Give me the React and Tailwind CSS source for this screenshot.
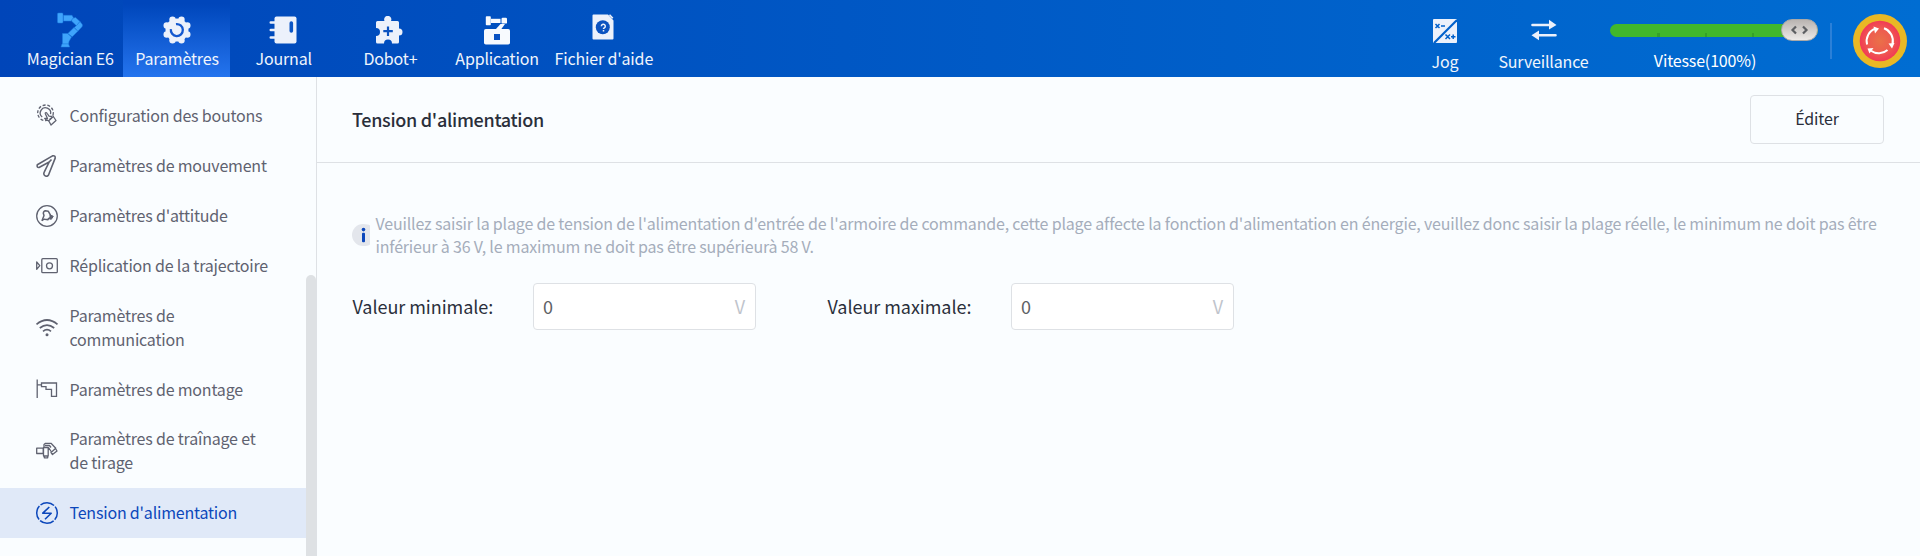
const navIcons = {
  robot: (
    <svg width="28" height="36" viewBox="0 0 28 36" fill="#3fa4fb" stroke="#1c7de0" strokeWidth="0.5">
      <rect x="1.500" y="1" width="5.500" height="10" rx="1" />
      <path d="M7.500 3.300h8.500l1.500 2.700-2.500 3H7.500z" />
      <path d="M16.500 6.500 19.500 5.500 24 9.500l-3.500 4.200-5-4.700z" />
      <path d="M24 9.500 26.300 12.500q.5 1.500-.5 2.500l-4 4.200-3.500-3.700 2.200-2z" />
      <path d="M18 15.500 21.800 19.200l-5.600 5.600-4.400-3.300z" />
      <path d="M6.500 21.500h5L15.500 25l-2.500 4.500-.5 2.500H6.500z" />
      <path d="M6 32h6.500l1.200 3H5z" />
    </svg>
  ),
  gear: (
    <svg width="28" height="28" viewBox="0 0 28 28">
      <g fill="#ecf1fb">
        <circle cx="14" cy="14" r="11.500" />
        <circle cx="18.500" cy="3.700" r="3.200" />
        <circle cx="24.300" cy="9.500" r="3.200" />
        <circle cx="24.300" cy="18.500" r="3.200" />
        <circle cx="18.500" cy="24.300" r="3.200" />
        <circle cx="9.500" cy="24.300" r="3.200" />
        <circle cx="3.700" cy="18.500" r="3.200" />
        <circle cx="3.700" cy="9.500" r="3.200" />
        <circle cx="9.500" cy="3.700" r="3.200" />
      </g>
      <path d="M13 8.100a6 6 0 1 1-5.100 5" fill="none" stroke="#1458cf" strokeWidth="2.300" />
    </svg>
  ),
  journal: (
    <svg width="28" height="28" viewBox="0 0 28 28">
      <rect x="5.500" y="0.500" width="22" height="27" rx="2" fill="#ecf1fb" />
      <g stroke="#ecf1fb" strokeWidth="2.600" strokeLinecap="round">
        <path d="M1.800 6.500H8M1.800 14H8M1.800 21.500H8" />
      </g>
      <rect x="20.500" y="5.200" width="3.600" height="11.500" rx="1.800" fill="#0b55c4" />
    </svg>
  ),
  puzzle: (
    <svg width="30" height="28" viewBox="0 0 30 28">
      <path
        d="M3.500 5H9.500a3.600 3.600 0 1 1 6.500 0H22.500a1.500 1.500 0 0 1 1.500 1.500V12.500a3.500 3.500 0 1 1 0 7V26a1.500 1.500 0 0 1-1.500 1.500H17a4 4 0 0 0-8 0H2.500A1.500 1.500 0 0 1 1 26V20a3.800 3.800 0 0 0 0-8V6.500A1.500 1.500 0 0 1 2.500 5z"
        fill="#ecf1fb"
      />
      <path d="M13 10.500v9.500M8.300 15.200h9.500" stroke="#0b52c0" strokeWidth="2.200" />
    </svg>
  ),
  application: (
    <svg width="28" height="30" viewBox="0 0 28 30" fill="#f7fafe">
      <rect x="1" y="14" width="26" height="15.500" rx="1.800" />
      <rect x="2.800" y="1.300" width="5" height="9" rx="0.800" />
      <rect x="8" y="3.800" width="9.500" height="4.200" />
      <rect x="18.500" y="2.800" width="5.500" height="5.800" rx="1.200" />
      <path d="M17.500 9h4.500l-4 5.500h-5.500z" />
      <rect x="11" y="19" width="6" height="6" fill="#0a52c2" />
    </svg>
  ),
  help: (
    <svg width="22" height="26" viewBox="0 0 22 26">
      <path d="M1.500 0.500H16l5.500 6V24.500a1 1 0 0 1-1 1h-19a1 1 0 0 1-1-1v-23a1 1 0 0 1 1-1z" fill="#ecf1fb" />
      <path d="M17.500 0.800 20.800 4.300" stroke="#ecf1fb" strokeWidth="1.600" />
      <circle cx="10.800" cy="13.300" r="7" fill="#0b52c0" />
      <path d="M9.300 12.200a2 2 0 1 1 3 1.700q-.8.500-.8 1.200M11.500 16v1.500" fill="none" stroke="#ecf1fb" strokeWidth="1.500" />
    </svg>
  ),
};

const navItems = [
  { icon: "robot", label: "Magician E6", pad: "pt-[12px]" },
  { icon: "gear", label: "Paramètres", pad: "pt-[16px]", active: true },
  { icon: "journal", label: "Journal", pad: "pt-[16px]" },
  { icon: "puzzle", label: "Dobot+", pad: "pt-[16px]" },
  { icon: "application", label: "Application", pad: "pt-[15px]" },
  { icon: "help", label: "Fichier d'aide", pad: "pt-[14px]" },
];

function NavItem({ icon, label, pad, active }) {
  return (
    <div
      className={`flex h-full w-[106.700px] flex-col items-center whitespace-nowrap text-[16px] tracking-[-0.15px] text-[#f0f5fc] ${
        active ? "bg-linear-to-b from-[#0046bb] from-5% to-[#2474ee]" : ""
      }`}
    >
      <div className={`flex h-[46px] shrink-0 items-start justify-center ${pad}`}>{navIcons[icon]}</div>
      <span className="pl-px leading-6">{label}</span>
    </div>
  );
}

function Speed() {
  return (
    <div className="ml-[9px] flex h-full w-[208px] flex-col pt-[19px]">
      <div className="relative flex h-[22px] items-center">
        <div className="flex h-[13px] w-full items-end rounded-full bg-[#41b72c]">
          <div className="ml-[47px] h-1 w-[3px] bg-[#35a029]" />
          <div className="ml-[45px] h-1 w-[2px] bg-[#35a029]" />
          <div className="ml-[45px] h-1 w-[2px] bg-[#35a029]" />
        </div>
        <div className="absolute right-0 top-0 flex h-[22px] w-[37px] items-center justify-center rounded-full border border-[#aaa9a8] bg-linear-to-b from-[#b9b4b1] to-[#edeae8]">
          <svg width="20" height="10" viewBox="0 0 20 10" fill="none" stroke="#5d5f62" strokeWidth="2.200">
            <path d="M6 1.500 2.500 5 6 8.500M13 1.500 16.500 5 13 8.500" />
          </svg>
        </div>
      </div>
      <span className="mt-[7px] w-[190px] text-center text-[16px] leading-6 tracking-[-0.15px] text-white">
        Vitesse(100%)
      </span>
    </div>
  );
}

function EmergencyStop() {
  return (
    <svg className="mb-[-5px] ml-[21px]" width="54" height="54" viewBox="0 0 54 54">
      <defs>
        <radialGradient id="stop">
          <stop offset="0" stopColor="#ea7048" />
          <stop offset="0.600" stopColor="#ee5b50" />
          <stop offset="1" stopColor="#f23a55" />
        </radialGradient>
      </defs>
      <circle cx="27" cy="27" r="27" fill="#e9b825" />
      <circle cx="27" cy="27" r="20.300" fill="url(#stop)" />
      <g fill="none" stroke="#fff" strokeWidth="2">
        <path d="M14.100 30.500A13.300 13.300 0 0 1 22.500 14.500" />
        <path d="M31 14.300A13.300 13.300 0 0 1 39.500 30" />
        <path d="M34.500 36A13.300 13.300 0 0 1 18 36.800" />
      </g>
      <g fill="#fff">
        <path d="M20.500 12.500 26 14.500l-4 5z" />
        <path d="M35.500 29.500l6-.5-2.500 5.500z" />
        <path d="M14.500 34.500l6-.5-4 5.500z" />
      </g>
    </svg>
  );
}

function Header() {
  return (
    <header className="flex h-[77px] shrink-0 bg-linear-to-r from-[#0045b9] to-[#006dd2] pl-[16.500px]">
      {navItems.map((item) => (
        <NavItem key={item.label} {...item} />
      ))}
      <div className="ml-auto flex h-full text-[16px] tracking-[-0.15px] text-[#f0f5fc]">
        <div className="flex w-[60px] flex-col items-center">
          <svg className="mt-[19px]" width="24" height="24" viewBox="0 0 24 24">
            <rect width="24" height="24" rx="1" fill="#ecf1fb" />
            <path d="M1 24 24 1" stroke="#0060cb" strokeWidth="2.200" />
            <g stroke="#0060cb" strokeWidth="1.500">
              <path d="M2.500 5 6.500 9M6.500 5 2.500 9M8 7h4M12.500 15.500l4.500 4.500M17 15.500 12.500 20M18 17.800h4.500M20.200 15.500v4.500" />
            </g>
          </svg>
          <span className="mt-[6px] leading-6">Jog</span>
        </div>
        <div className="ml-[11px] flex w-[115px] flex-col items-center">
          <svg className="mt-[19px]" width="26" height="22" viewBox="0 0 26 22">
            <path d="M1.500 6H21M5 16.300H24.500" stroke="#ecf1fb" strokeWidth="2.600" strokeLinecap="round" />
            <path d="M18 .8 25.500 6 18 10.500zM8 11.500.5 16.300 8 21.300z" fill="#ecf1fb" />
          </svg>
          <span className="mt-[8px] leading-6">Surveillance</span>
        </div>
        <Speed />
        <div className="ml-[12px] mt-[23px] h-9 w-[2px] bg-[#2b80d8]" />
        <div className="mr-[13px] flex items-center">
          <EmergencyStop />
        </div>
      </div>
    </header>
  );
}

function SideIcon({ children }) {
  return (
    <svg
      className="shrink-0 overflow-visible"
      width="22"
      height="22"
      viewBox="0 0 22 22"
      fill="none"
      stroke="currentColor"
      strokeWidth="1.300"
      strokeLinejoin="round"
    >
      {children}
    </svg>
  );
}

const sideItems = [
  {
    label: "Configuration des boutons",
    icon: (
      <>
        <circle cx="9.500" cy="7.800" r="7.800" strokeDasharray="3 1.800" />
        <path d="M6.200 12A5.200 5.200 0 1 1 14.500 9.200" />
        <path d="M9 8q1.300-1 2.200.5L13 11.200l3 .3M9 8l2.500 5.500-2.800-.2 1.500 1.700 2.700.8" />
        <path d="M12.700 15.700 17.300 11.500 20 15.500 15 20z" />
      </>
    ),
  },
  {
    label: "Paramètres de mouvement",
    icon: (
      <path
        strokeWidth="1.600"
        d="M1.300 9.800 16.500.9q3-.7 2.700 2.200L13 18.800a2.600 2.600 0 1 1-4.800-1.600L13.200 7 3 12.500q-2.500.2-1.700-2.700zM13.200 7l2.300-2.500"
      />
    ),
  },
  {
    label: "Paramètres d'attitude",
    icon: (
      <>
        <circle cx="11" cy="11" r="10.300" />
        <path strokeWidth="1.500" d="M6 15.800 8 10.500 7.300 8.300Q7.500 6 9.500 5.800l2.700.4 2.300 4" />
        <path strokeWidth="1.500" d="M6 15.800q1.500-2 3-1.500l3 .4.600-1.500" />
        <path strokeWidth="1" fill="currentColor" d="M14 9.800l3.300 1.500-2 3-3.300-.8 2-1z" />
      </>
    ),
  },
  {
    label: "Réplication de la trajectoire",
    icon: (
      <>
        <rect x="5.800" y="3.700" width="15.500" height="14" rx="1" />
        <circle cx="13.500" cy="10.800" r="3" />
        <path d="M.7 7 3.800 10.700.7 14.300z" />
      </>
    ),
  },
  {
    label: "Paramètres de communication",
    icon: (
      <>
        <path strokeWidth="1.700" d="M.5 7.300Q11-1.300 21.500 7.300M3.800 11q7.200-5.900 14.400 0M7 14.300q4-3.300 8 0" />
        <circle cx="11" cy="17.800" r="1.500" fill="currentColor" stroke="none" />
      </>
    ),
  },
  {
    label: "Paramètres de montage",
    icon: <path strokeLinejoin="miter" d="M1.200 1.500v18.500M1.200 6.800H5.500M5.500 5H20.500V18.300H15.500V11.300H10V8.600H5.500z" />,
  },
  {
    label: "Paramètres de traînage et de tirage",
    icon: (
      <>
        <path d="M.7 8.200H7.200V13.500H.7zM7.500 7.500h4.700v8.500H7.500zM8.300 16v1.800h3.400V16M8 7.500V4.500L9.500 3.300h5.500L20 8.500M12.500 7.500l3 4.500" />
        <path d="M15 12.500l4.500-4 1.500 2.500-4.500 3.500zM9 5.500h4.500l1.500 2" />
      </>
    ),
  },
  {
    label: "Tension d'alimentation",
    active: true,
    icon: (
      <>
        <circle cx="11" cy="11" r="10.300" strokeWidth="1.500" strokeDasharray="14.700 1.480" strokeDashoffset="7.300" />
        <path strokeWidth="1.600" d="M13.300 5 6.800 11.200h8.400L9 17.200" />
      </>
    ),
  },
];

function Sidebar() {
  return (
    <aside className="flex w-[317px] shrink-0 overflow-hidden border-r border-[#dee1e5]">
      <nav className="flex w-[306px] flex-col pt-[14px]">
        {sideItems.map((item) => (
          <div
            key={item.label}
            className={`flex shrink-0 items-center gap-[11.500px] py-[13.100px] pl-9 pr-[34px] text-[16px] leading-[23.750px] tracking-[-0.2px] ${
              item.active ? "bg-[#e0e9f8] text-[#0c47bb]" : "text-[#5f6270]"
            }`}
          >
            <SideIcon>{item.icon}</SideIcon>
            <span>{item.label}</span>
          </div>
        ))}
      </nav>
      <div className="mt-[198px] w-[10px] rounded-t-full bg-[#dee1e4]" />
    </aside>
  );
}

function VoltageField({ label, gap }) {
  return (
    <div className="flex items-center">
      <span className={`pl-[0.500px] text-[18px] tracking-[-0.050px] text-[#2a2f3b] ${gap}`}>{label}</span>
      <div className="flex h-[47px] w-[223px] items-center justify-between rounded-[4px] border border-[#dee1e5] bg-white pl-[9px] pr-[10px] text-[18px]">
        <span className="text-[#606266]">0</span>
        <span className="text-[#c0c4cc]">V</span>
      </div>
    </div>
  );
}

function Content() {
  return (
    <main className="flex min-w-0 flex-1 flex-col">
      <div className="flex h-[86px] shrink-0 items-center justify-between border-b border-[#dee1e5] pl-[35px] pr-9">
        <h1 className="text-[18px] font-medium tracking-[-0.3px] text-[#2a2f3b]">Tension d'alimentation</h1>
        <button className="mb-[1px] h-[49px] w-[134px] rounded-[4px] border border-[#dee1e5] pb-[2px] text-[16px] tracking-[-0.15px] text-[#2a2f3b]">
          Éditer
        </button>
      </div>
      <div className="mt-[49px] flex items-center pl-[35px] pr-9">
        <svg className="shrink-0" width="18" height="22" viewBox="0 0 18 22">
          <path d="M18 1.500Q16 0 11 0A11 11 0 1 0 11 22Q16 22 18 20.500z" fill="#e3e6ec" />
          <circle cx="11.500" cy="5.600" r="1.800" fill="#0c47bb" />
          <rect x="10" y="8.800" width="3" height="9.500" rx="1" fill="#0c47bb" />
        </svg>
        <p className="ml-[5.500px] text-[16px] leading-[23px] tracking-[-0.178px] text-[#a5adbb]">
          Veuillez saisir la plage de tension de l'alimentation d'entrée de l'armoire de commande, cette plage affecte la
          fonction d'alimentation en énergie, veuillez donc saisir la plage réelle, le minimum ne doit pas être
          inférieur à 36 V, le maximum ne doit pas être supérieurà 58 V.
        </p>
      </div>
      <div className="mt-[25px] flex pl-[35px]">
        <VoltageField label="Valeur minimale:" gap="w-[181px]" />
        <div className="w-[71px]" />
        <VoltageField label="Valeur maximale:" gap="w-[184px]" />
      </div>
    </main>
  );
}

export default function App() {
  return (
    <div className="flex h-[556px] w-[1920px] flex-col overflow-hidden bg-[#fafdff] font-['Noto_Sans_CJK_SC','Noto_Sans',sans-serif]">
      <Header />
      <div className="flex min-h-0 flex-1">
        <Sidebar />
        <Content />
      </div>
    </div>
  );
}
